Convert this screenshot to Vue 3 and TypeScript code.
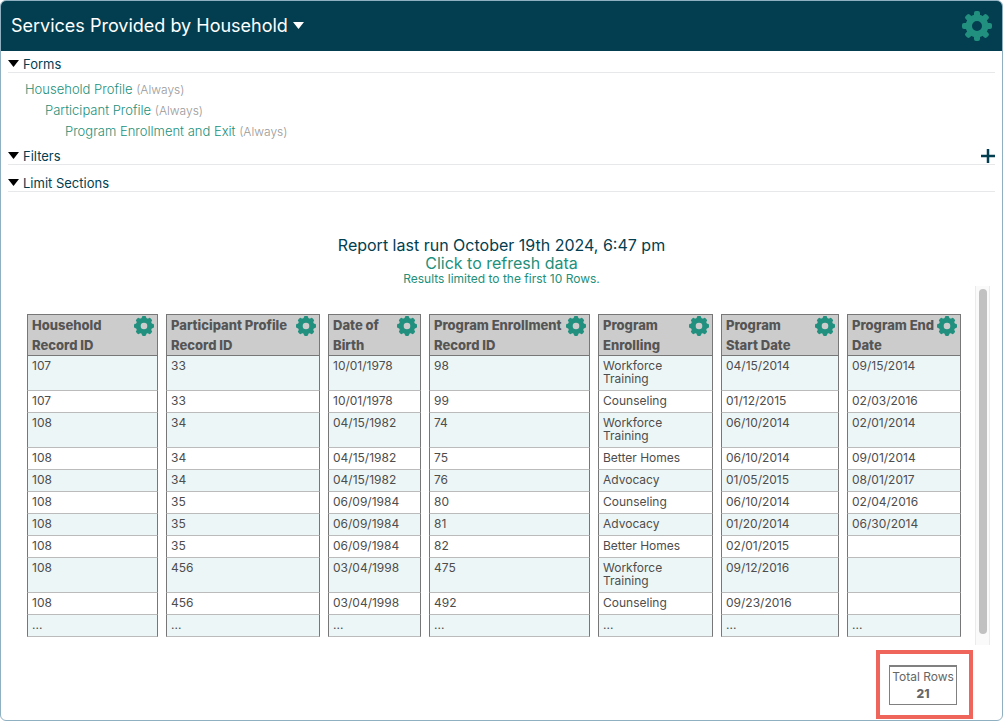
<script setup lang="ts">
interface Column {
  lines: string[]
  width: number
}

interface FormLink {
  name: string
  level: number
}

const forms: FormLink[] = [
  { name: 'Household Profile', level: 0 },
  { name: 'Participant Profile', level: 1 },
  { name: 'Program Enrollment and Exit', level: 2 },
]

const columns: Column[] = [
  { lines: ['Household', 'Record ID'], width: 131 },
  { lines: ['Participant Profile', 'Record ID'], width: 154 },
  { lines: ['Date of', 'Birth'], width: 93 },
  { lines: ['Program Enrollment', 'Record ID'], width: 161 },
  { lines: ['Program', 'Enrolling'], width: 115 },
  { lines: ['Program', 'Start Date'], width: 118 },
  { lines: ['Program End', 'Date'], width: 114 },
]

const rows: string[][] = [
  ['107', '33', '10/01/1978', '98', 'Workforce Training', '04/15/2014', '09/15/2014'],
  ['107', '33', '10/01/1978', '99', 'Counseling', '01/12/2015', '02/03/2016'],
  ['108', '34', '04/15/1982', '74', 'Workforce Training', '06/10/2014', '02/01/2014'],
  ['108', '34', '04/15/1982', '75', 'Better Homes', '06/10/2014', '09/01/2014'],
  ['108', '34', '04/15/1982', '76', 'Advocacy', '01/05/2015', '08/01/2017'],
  ['108', '35', '06/09/1984', '80', 'Counseling', '06/10/2014', '02/04/2016'],
  ['108', '35', '06/09/1984', '81', 'Advocacy', '01/20/2014', '06/30/2014'],
  ['108', '35', '06/09/1984', '82', 'Better Homes', '02/01/2015', ''],
  ['108', '456', '03/04/1998', '475', 'Workforce Training', '09/12/2016', ''],
  ['108', '456', '03/04/1998', '492', 'Counseling', '09/23/2016', ''],
  ['...', '...', '...', '...', '...', '...', '...'],
]

const angles: number[] = [0, 45, 90, 135, 180, 225, 270, 315]
</script>

<template>
  <main class="report">
    <header class="bar">
      <h1>
        <button class="title" type="button">
          Services Provided by Household
          <svg class="caret" viewBox="0 0 11 7" aria-hidden="true"><path d="M0 0h11L5.500 7z" /></svg>
        </button>
      </h1>
      <button class="icon-button" type="button" aria-label="Report settings">
        <svg class="gear gear-large" viewBox="-15 -15 30 30" aria-hidden="true">
          <circle r="8.200" fill="none" stroke="currentColor" stroke-width="6.400" />
          <rect v-for="a in angles" :key="a" x="-3" y="-15" width="6" height="7" rx="2" :transform="`rotate(${a})`" />
        </svg>
      </button>
    </header>

    <section class="section">
      <div class="section-head">
        <button class="toggle" type="button">
          <svg viewBox="0 0 11 7" aria-hidden="true"><path d="M0 0h11L5.500 7z" /></svg>
          Forms
        </button>
      </div>
      <ul class="forms">
        <li v-for="form in forms" :key="form.name" :class="`level-${form.level}`">
          <a href="#">{{ form.name }}</a> <span>(Always)</span>
        </li>
      </ul>
    </section>
    <section class="section">
      <div class="section-head">
        <button class="toggle" type="button">
          <svg viewBox="0 0 11 7" aria-hidden="true"><path d="M0 0h11L5.500 7z" /></svg>
          Filters
        </button>
        <button class="icon-button" type="button" aria-label="Add filter">
          <svg class="plus" viewBox="0 0 14 14" aria-hidden="true"><path d="M7 0v14M0 7h14" /></svg>
        </button>
      </div>
    </section>
    <section class="section limits">
      <div class="section-head">
        <button class="toggle" type="button">
          <svg viewBox="0 0 11 7" aria-hidden="true"><path d="M0 0h11L5.500 7z" /></svg>
          Limit Sections
        </button>
      </div>
    </section>

    <div class="status">
      <p>Report last run October 19th 2024, 6:47 pm</p>
      <a href="#">Click to refresh data</a>
      <p class="note">Results limited to the first 10 Rows.</p>
    </div>

    <div class="results">
      <table>
        <colgroup>
          <col v-for="(c, i) in columns" :key="i" :style="{ width: c.width + 'px' }" />
        </colgroup>
        <thead>
          <tr>
            <th v-for="(c, i) in columns" :key="i" scope="col">
              <div class="th-inner">
                <div class="th-text">
                  <div v-for="line in c.lines" :key="line">{{ line }}</div>
                </div>
                <button class="icon-button" type="button" :aria-label="`${c.lines.join(' ')} settings`">
                  <svg class="gear" viewBox="-10 -10 20 20" aria-hidden="true">
                    <circle r="5.800" fill="none" stroke="currentColor" stroke-width="5" />
                    <rect v-for="a in angles" :key="a" x="-2.200" y="-10" width="4.400" height="4" rx="1.400" :transform="`rotate(${a})`" />
                  </svg>
                </button>
              </div>
            </th>
          </tr>
        </thead>
        <tbody>
          <tr v-for="(row, r) in rows" :key="r">
            <td v-for="(cell, c) in row" :key="c">{{ cell }}</td>
          </tr>
        </tbody>
      </table>
      <div class="track"><div class="thumb"></div></div>
    </div>

    <footer class="summary">
      <div class="highlight">
        <div class="total">
          <span>Total Rows</span>
          <strong>21</strong>
        </div>
      </div>
    </footer>
  </main>
</template>

<style>
body {
  margin: 0;
  background: #fff;
}
</style>

<style scoped>
.report {
  box-sizing: border-box;
  min-height: 100vh;
  border: 1px solid #8fb0c0;
  border-radius: 6px;
  overflow: hidden;
  background: #fff;
  color: #023e50;
  font-family: Inter, "Liberation Sans", sans-serif;
  font-size: 13px;
}

button {
  margin: 0;
  padding: 0;
  border: 0;
  background: none;
  color: inherit;
  font: inherit;
  cursor: pointer;
}

a {
  color: #22907a;
  text-decoration: none;
}

.bar {
  display: flex;
  align-items: center;
  justify-content: space-between;
  height: 50px;
  padding: 0 10px;
  background: #023e50;
  color: #fff;
}

h1 {
  margin: 0;
  padding-bottom: 2px;
  font-size: 18px;
  font-weight: 400;
}

.title {
  display: flex;
  align-items: center;
  gap: 5px;
}

.caret {
  width: 11px;
  height: 7px;
  fill: #fff;
}

.icon-button {
  flex: none;
  line-height: 0;
}

.gear {
  width: 20px;
  height: 20px;
  color: #22907f;
  fill: currentColor;
}

.gear-large {
  width: 30px;
  height: 30px;
}

.section {
  padding: 0 7px;
}

.section-head {
  display: flex;
  align-items: center;
  justify-content: space-between;
  height: 17px;
  padding-top: 4px;
  border-bottom: 1px solid #e6e8e9;
}

.toggle {
  display: flex;
  align-items: center;
  gap: 4px;
  line-height: 18px;
}

.toggle svg {
  width: 11px;
  height: 7px;
  fill: #000;
}

.plus {
  width: 14px;
  height: 14px;
  stroke: #023e50;
  stroke-width: 2.500;
}

.forms {
  margin: 0;
  padding: 6px 0 1px 17px;
  list-style: none;
  color: #aaa;
  font-weight: 300;
  line-height: 21px;
}

.forms span {
  color: #999;
  font-size: 12px;
}

.level-1 {
  padding-left: 20px;
}

.level-2 {
  padding-left: 40px;
}

.limits {
  padding-top: 5px;
}

.status {
  padding-top: 44px;
  text-align: center;
  font-size: 16px;
  line-height: 18px;
}

.status p {
  margin: 0;
}

.status .note {
  color: #22907a;
  font-size: 12px;
  line-height: 14px;
}

.results {
  display: flex;
  align-items: stretch;
  gap: 6px;
  padding: 0 13px 0 18px;
}

table {
  flex: 1;
  width: 100%;
  margin: 28px 0 8px;
  border-collapse: separate;
  border-spacing: 8px 0;
  table-layout: fixed;
  color: #4d4d4d;
  font-size: 12px;
  line-height: 13px;
}

th {
  padding: 0 3px 0 4px;
  border: 1px solid #777;
  background: #ccc;
  color: #555;
  font-size: 13px;
  font-weight: 800;
  line-height: 20px;
  text-align: left;
  vertical-align: top;
}

.th-inner {
  display: flex;
  align-items: flex-start;
  justify-content: space-between;
}

.th-text {
  flex: 1;
  min-width: 0;
  white-space: nowrap;
}

.th-inner .icon-button {
  padding-top: 1px;
}

td {
  padding: 3px 32px 5px 4px;
  border: 1px solid #777;
  border-top: 0;
  border-bottom-color: #bbb;
  vertical-align: top;
}

td:nth-child(3),
td:nth-child(5) {
  padding-right: 8px;
}

tbody tr:nth-child(odd) td {
  background: #edf6f6;
}

td:empty::after {
  content: "\00a0";
}

.track {
  flex: none;
  box-sizing: border-box;
  width: 15px;
  padding: 3px 3px 11px;
  border: 1px solid #ebebeb;
  border-width: 0 1px;
  background: #fafafa;
}

.thumb {
  width: 8px;
  height: 100%;
  border-radius: 4px;
  background: #c1c1c1;
}

.summary {
  display: flex;
  justify-content: flex-end;
  padding: 5px 29px 1px 0;
}

.highlight {
  padding: 11px 12px 10px 9px;
  border: 4px solid #ef655b;
}

.total {
  box-sizing: border-box;
  display: flex;
  flex-direction: column;
  align-items: center;
  width: 68px;
  height: 40px;
  padding-top: 1px;
  border: 1px solid #808080;
  border-top-width: 2px;
  color: #666;
  font-size: 12px;
  line-height: 17px;
}

.total strong {
  font-weight: 800;
}
</style>
